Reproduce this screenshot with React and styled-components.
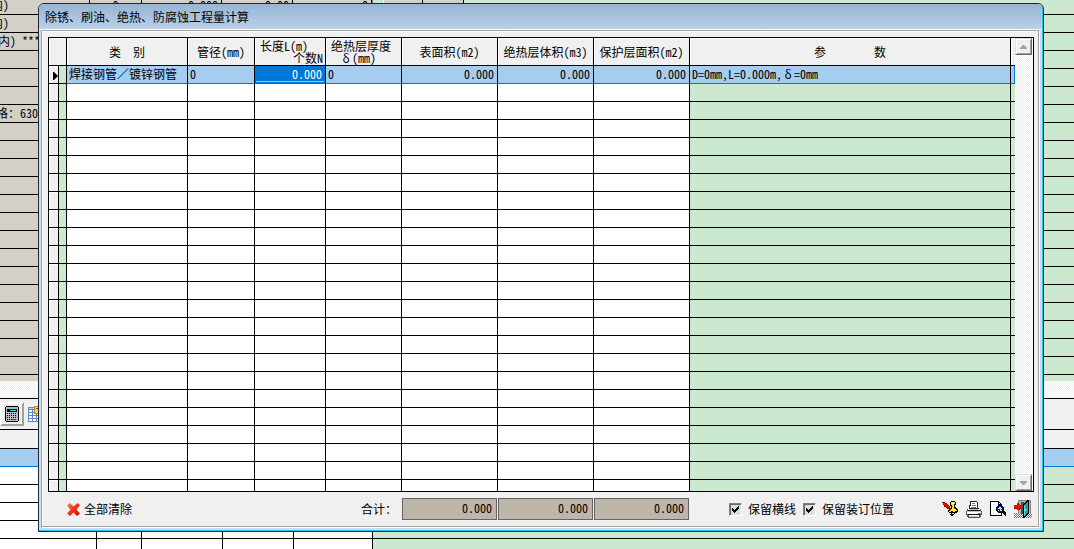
import styled, { createGlobalStyle, css } from "styled-components";
import { useState } from "react";

const GlobalStyle = createGlobalStyle`
  * {
    box-sizing: border-box;
  }
  body {
    margin: 0;
    background: #f0f0f0;
    color: #000;
    font-family: "Noto Sans Mono CJK SC", "Noto Sans CJK SC", monospace;
    font-size: 12px;
    line-height: 12px;
  }
  button, input {
    font: inherit;
    color: inherit;
  }
`;

const columns = [
  { id: "category", title: "类　别", width: 121 },
  { id: "diameter", title: "管径(mm)", width: 67 },
  { id: "length", width: 71 },
  { id: "thickness", width: 76 },
  { id: "surface", title: "表面积(m2)", width: 96, align: "right" },
  { id: "volume", title: "绝热层体积(m3)", width: 96, align: "right" },
  { id: "cover", title: "保护层面积(m2)", width: 96, align: "right" },
  { id: "params", title: "参　　　　数" },
];

const emptyRows = Array.from({ length: 23 }, (_, i) => i);

const backRows = Array.from({ length: 22 }, (_, i) => {
  if (i === 0) return { text: "内)", indent: -9, first: true };
  if (i === 1) return { text: "内)", indent: -9 };
  if (i === 2) return { text: "内) ***", indent: -2 };
  if (i === 6) return { text: "格：630", indent: -4 };
  return {};
});

const CalculatorIcon = () => (
  <svg width="14" height="16" viewBox="0 0 14 16" shapeRendering="crispEdges">
    <path d="M1 0h12v1h1v14h-1v1H1v-1H0V1h1z" fill="#000" />
    <rect x="1" y="1" width="12" height="14" fill="#b8b8b8" />
    <rect x="2" y="3" width="10" height="3" fill="#000" />
    <rect x="5" y="4" width="6" height="1" fill="#00e0f0" />
    <path
      d="M2 7.500h10M2 9.500h10M2 11.500h10M2 13.500h5"
      stroke="#000"
      strokeDasharray="1 1"
    />
    <rect x="7" y="13" width="4" height="1" fill="#f00" />
  </svg>
);

const SheetIcon = () => (
  <svg width="16" height="16" viewBox="0 0 16 16" shapeRendering="crispEdges">
    <rect x="0" y="1" width="16" height="15" fill="#5f86cf" />
    <path
      d="M1 4h3v2H1zM5 4h2v2H5zM1 7h3v2H1zM5 7h3v2H5zM9 7h3v2H9zM1 10h3v2H1zM5 10h3v2H5zM9 10h3v2H9zM1 13h3v2H1zM5 13h3v2H5zM9 13h3v2H9z"
      fill="#fff"
    />
    <rect x="1" y="2" width="5" height="1" fill="#b6cbf5" />
    <rect x="6" y="0" width="10" height="8" fill="#b08a20" />
    <rect x="7" y="1" width="9" height="6" fill="#ecd766" />
    <rect x="8" y="2" width="4" height="1" fill="#a33a12" />
  </svg>
);

const ClearIcon = () => (
  <svg width="13" height="13" viewBox="0 0 13 13">
    <defs>
      <linearGradient id="clearRed" x1="0" y1="0" x2="1" y2="1">
        <stop offset="0" stopColor="#ff7d60" />
        <stop offset="0.5" stopColor="#f03318" />
        <stop offset="1" stopColor="#b80d00" />
      </linearGradient>
    </defs>
    <path
      d="M0 2.500L3 0 6.500 3.500 10.500 0 13 2 9.500 6.500 13 10.500 10 13 6.500 9.500 3 13 0 10.500 3.500 6.500z"
      fill="url(#clearRed)"
    />
  </svg>
);

const ScrollIcon = () => (
  <svg width="16" height="16" viewBox="0 0 16 16" shapeRendering="crispEdges">
    <path
      d="M8 1h1V0h4v1h1v3h-1v2h1v1h1v1h1v3h-1v1h-2v1h-1v1h-1v1H9v-1H8v-1h1v-1H7v-1H6V9h2V8h1V5H8z"
      fill="#000"
    />
    <path
      d="M9 1h4v2h-1v4h1v1h1v1h1v1h-2v1h-2v-1H9v1H7v-1h1V9h1V8h1V4H9zM10 12h2v1h-2z"
      fill="#f3e43c"
    />
    <path d="M10 2h2v1h-2zM9 9h3v1H9z" fill="#fffb8c" />
    <path d="M12 7h1v1h-1zM10 5h1v1h-1z" fill="#9c8d0e" />
    <path
      d="M0 1h3v1h2v1h1v1h1v1h1v2h1v2H7V8H5V7H4V6H2V4H1V2H0z"
      fill="#8b0000"
    />
    <path d="M1 2h2v1h2v1h1v1h1v2H5V6H4V5H3V4H2V3H1z" fill="#f00" />
  </svg>
);

const PrinterIcon = () => (
  <svg width="16" height="17" viewBox="0 0 16 17" shapeRendering="crispEdges">
    <path d="M4 0h7v1h1v6h1v1H3V4h1z" fill="#222" />
    <path d="M5 1h6v6H4V5h1z" fill="#fff" />
    <path d="M6 2h3v1H6zM6 4h4v1H6zM5 6h5v1H5z" fill="#777" />
    <path
      d="M1 8h14v2h1v4h-1v2h-1v1H2v-1H1v-2H0v-4h1z"
      fill="#555"
    />
    <path d="M2 8h12v2H2zM1 10h14v3H1zM3 14h10v2H3z" fill="#fff" />
    <path d="M4 8h8v1H4zM1 10h14v1H1zM3 15h9v1H3z" fill="#c4c4c4" />
    <path d="M2 9h12v1H2zM2 13h12v1H2z" fill="#111" />
    <rect x="12" y="12" width="3" height="1" fill="#f06a20" />
  </svg>
);

const PreviewIcon = () => (
  <svg width="16" height="16" viewBox="0 0 16 16" shapeRendering="crispEdges">
    <path d="M0 0h9v1h1v1h1v1h1v12H0z" fill="#000" />
    <path d="M1 1h7v3h3v10H1z" fill="#fff" />
    <path d="M9 2h1v1H9z" fill="#fff" />
    <path
      d="M8 4h4v1h1v1h1v4h1v1h1v2h1v2h-2v-1h-1v-1h-1v-1H8v-1H7v-1H6V6h1V5h1z"
      fill="#000"
    />
    <path d="M8 5h4v1h1v4h-1v1H8v-1H7V6h1z" fill="#0018d8" />
    <path d="M9 6h2v1h1v1h-1v1h1v1h-2V8H9z" fill="#f4ef4a" />
    <path d="M8 7h1v1H8zM8 9h1v1H8z" fill="#d8e4ff" />
    <path d="M13 11h1v1h-1zM14 12h1v1h-1zM15 13h1v1h-1z" fill="#0018d8" />
  </svg>
);

const ExitIcon = () => (
  <svg width="18" height="18" viewBox="0 0 18 18" shapeRendering="crispEdges">
    <path
      d="M0 13.500h18M1 14.500h17M0 15.500h18M1 16.500h17M0 17.500h18"
      stroke="#707070"
      strokeDasharray="1 1"
    />
    <rect x="4" y="0" width="13" height="13" fill="#808080" />
    <rect x="5" y="1" width="11" height="12" fill="#b4b4b4" />
    <rect x="7" y="2" width="3" height="12" fill="#505050" />
    <path d="M9 4h1V3h1V2h1V1h1V0h2v14h-1v1h-1v1h-1v1h-1v1H9z" fill="#000" />
    <path d="M10 5h1V4h1V3h1V2h1v11h-1v1h-1v1h-1v1h-1z" fill="#12a6a6" />
    <rect x="10" y="5" width="1" height="11" fill="#58d8d8" />
    <rect x="11" y="9" width="1" height="2" fill="#fff" />
    <path d="M0 5h3V3h2v1h1v1h1v1h1v1H7v1H6v1H5v1H3V8H0z" fill="#f00" />
    <path d="M0 8h3v1H0zM6 8h1v1H6zM5 9h1v1H5z" fill="#8b0000" />
  </svg>
);

const CheckMark = () => (
  <CheckSvg width="7" height="7" viewBox="0 0 7 7" shapeRendering="crispEdges">
    <path d="M0 2h1v1h1v1h1V3h1V2h1V1h1V0h1v3H6v1H5v1H4v1H3v1H2V6H1V5H0z" />
  </CheckSvg>
);

const record = {
  category: "焊接钢管／镀锌钢管",
  diameter: "0",
  thickness: "0",
  surface: "0.000",
  volume: "0.000",
  cover: "0.000",
};

export default function App() {
  const [length, setLength] = useState("0.000");
  const [keepLines, setKeepLines] = useState(true);
  const [keepBinding, setKeepBinding] = useState(true);

  const renderCell = (id) => {
    if (id === "length") {
      return (
        <CellInput
          aria-label="长度"
          value={length}
          onChange={(e) => setLength(e.target.value)}
        />
      );
    }
    if (id === "params") {
      return (
        <>
          D=0mm,L={length}m,<Wide>δ</Wide>=0mm
        </>
      );
    }
    return record[id];
  };

  return (
    <Screen>
      <GlobalStyle />
      <Backdrop aria-hidden="true">
        <UpperPane>
          <BackTable>
            {backRows.map((row, i) => (
              <BackRow key={i} $first={row.first}>
                <BackCell $width={90} $indent={row.indent}>
                  {row.text}
                </BackCell>
                <BackCell $width={52} $center>
                  {row.first && "0"}
                </BackCell>
                <BackCell $width={80} $right>
                  {row.first && "0.000"}
                </BackCell>
                <BackCell $width={71} $right>
                  {row.first && "0.00"}
                </BackCell>
                <BackCell $width={79} $right>
                  {row.first && "0"}
                </BackCell>
              </BackRow>
            ))}
          </BackTable>
          <Splitter />
          <SideTable>
            {backRows.map((row, i) => (
              <BackRow key={i} $first={row.first}>
                <BackCell $width={39} $gray />
                <BackCell $width={41} $gray />
              </BackRow>
            ))}
          </SideTable>
        </UpperPane>
        <DitherStrip />
        <BackToolbar>
          <RaisedTool>
            <CalculatorIcon />
          </RaisedTool>
          <SheetIcon />
        </BackToolbar>
        <BackHeading />
        <LowerRow $selected />
        {[0, 1, 2, 3, 4, 5].map((i) => (
          <LowerRow key={i}>
            <LowerCell $width={97} />
            <LowerCell $width={45} />
            <LowerCell $width={81} />
            <LowerCell $width={71} />
            <LowerCell $width={79} />
            <LowerRest />
          </LowerRow>
        ))}
      </Backdrop>

      <Dialog role="dialog" aria-labelledby="dialogTitle">
        <TitleBar id="dialogTitle">除锈、刷油、绝热、防腐蚀工程量计算</TitleBar>
        <DialogBody>
          <GridFrame>
            <Table>
              <colgroup>
                <Col $width={10} />
                <Col $width={8} />
                {columns.map((col) => (
                  <Col key={col.id} $width={col.width} />
                ))}
                <Col $width={4} />
              </colgroup>
              <thead>
                <tr>
                  <HeadCell colSpan="2" />
                  {columns.map((col) => (
                    <HeadCell key={col.id} scope="col">
                      {col.id === "length" && (
                        <TwoLines>
                          <span>长度L(m)</span>
                          <EndLine>个数N</EndLine>
                        </TwoLines>
                      )}
                      {col.id === "thickness" && (
                        <TwoLines>
                          <span>绝热层厚度</span>
                          <MidLine>
                            <Wide>δ</Wide>(mm)
                          </MidLine>
                        </TwoLines>
                      )}
                      {col.title}
                    </HeadCell>
                  ))}
                  <HeadCell $last />
                </tr>
              </thead>
              <tbody>
                <Row $current>
                  <MarkCell>
                    <svg width="5" height="8" viewBox="0 0 5 8">
                      <path d="M0 0h1l4 4-4 4H0z" />
                    </svg>
                  </MarkCell>
                  <Cell $green />
                  {columns.map((col) => (
                    <Cell key={col.id} $align={col.align}>
                      {renderCell(col.id)}
                    </Cell>
                  ))}
                  <Cell $last />
                </Row>
                {emptyRows.map((i) => (
                  <Row key={i} $cut={i === emptyRows.length - 1}>
                    <MarkCell />
                    <Cell $green />
                    {columns.map((col) => (
                      <Cell key={col.id} $green={col.id === "params"} />
                    ))}
                    <Cell $green $last />
                  </Row>
                ))}
              </tbody>
            </Table>
            <ScrollBar>
              <ScrollButton type="button" aria-label="向上">
                <svg width="7" height="4" viewBox="0 0 7 4">
                  <path d="M3 0h1l3 3v1H0V3z" fill="#a0a0a0" />
                </svg>
              </ScrollButton>
              <ScrollButton type="button" aria-label="向下">
                <svg width="7" height="4" viewBox="0 0 7 4">
                  <path d="M3 4h1l3-3V0H0v1z" fill="#a0a0a0" />
                </svg>
              </ScrollButton>
            </ScrollBar>
          </GridFrame>

          <Footer>
            <FooterLead>
              <PlainButton type="button" onClick={() => setLength("0.000")}>
                <ClearIcon />
                全部清除
              </PlainButton>
              <span>合计：</span>
            </FooterLead>
            <Totals>
              <Total>0.000</Total>
              <Total>0.000</Total>
              <Total>0.000</Total>
            </Totals>
            <Options>
              <CheckLabel>
                <CheckBox
                  type="checkbox"
                  checked={keepLines}
                  onChange={(e) => setKeepLines(e.target.checked)}
                />
                {keepLines && <CheckMark />}
                保留横线
              </CheckLabel>
              <CheckLabel>
                <CheckBox
                  type="checkbox"
                  checked={keepBinding}
                  onChange={(e) => setKeepBinding(e.target.checked)}
                />
                {keepBinding && <CheckMark />}
                保留装订位置
              </CheckLabel>
            </Options>
            <Tools>
              <PlainButton type="button" aria-label="设置">
                <ScrollIcon />
              </PlainButton>
              <PlainButton type="button" aria-label="打印">
                <PrinterIcon />
              </PlainButton>
              <PlainButton type="button" aria-label="预览">
                <PreviewIcon />
              </PlainButton>
              <PlainButton type="button" aria-label="退出">
                <ExitIcon />
              </PlainButton>
            </Tools>
          </Footer>
        </DialogBody>
      </Dialog>
    </Screen>
  );
}

const dither = css`
  background: repeating-conic-gradient(#fff 0 25%, #f0f0f0 0 50%) 0 0 / 2px 2px;
`;

const raised = css`
  border: 1px solid;
  border-color: #e3e3e3 #696969 #696969 #e3e3e3;
  box-shadow: inset 1px 1px 0 #fff, inset -1px -1px 0 #a0a0a0;
  background: #f0f0f0;
`;

const Screen = styled.div`
  position: relative;
  height: 100vh;
  overflow: hidden;
`;

const Backdrop = styled.div`
  display: flex;
  flex-direction: column;
`;

const UpperPane = styled.div`
  display: flex;
  height: 381px;
  overflow: hidden;
`;

const BackTable = styled.div`
  background: #d4d0c8;
`;

const Splitter = styled.div`
  width: 12px;
  background: #cce8cf;
  border-left: 1px solid #808080;
  border-right: 1px solid #fff;
`;

const SideTable = styled.div`
  flex: 1;
  background: #cce8cf;
`;

const BackRow = styled.div`
  display: flex;
  height: ${(props) => (props.$first ? 15 : 18)}px;
  line-height: ${(props) => (props.$first ? 10 : 16)}px;
  border-bottom: 1px solid #000;
`;

const BackCell = styled.div`
  width: ${(props) => props.$width}px;
  padding-right: ${(props) => (props.$right ? 3 : 0)}px;
  text-indent: ${(props) => props.$indent || 0}px;
  text-align: ${(props) =>
    props.$right ? "right" : props.$center ? "center" : "left"};
  background: ${(props) => (props.$gray ? "#d4d0c8" : "transparent")};
  border-right: 1px solid #000;
  white-space: pre;
`;

const DitherStrip = styled.div`
  height: 18px;
  border-bottom: 1px solid #000;
  ${dither}
`;

const BackToolbar = styled.div`
  display: flex;
  align-items: center;
  gap: 4px;
  height: 31px;
  border-bottom: 1px solid #000;
`;

const RaisedTool = styled.div`
  display: flex;
  align-items: center;
  justify-content: center;
  width: 24px;
  height: 24px;
  border: 2px solid;
  border-color: #fff #a0a0a0 #a0a0a0 #fff;
`;

const BackHeading = styled.div`
  height: 19px;
  border-bottom: 1px solid #000;
`;

const LowerRow = styled.div`
  display: flex;
  height: 18px;
  background: ${(props) => (props.$selected ? "#a4cdf0" : "#fff")};
  border-bottom: 1px solid ${(props) => (props.$selected ? "#0078d7" : "#000")};
`;

const LowerCell = styled.div`
  width: ${(props) => props.$width}px;
  border-right: 1px solid #000;
`;

const LowerRest = styled.div`
  flex: 1;
  background: #cce8cf;
`;

const Dialog = styled.div`
  position: absolute;
  top: 3px;
  left: 38px;
  right: 30px;
  padding: 0 4px 4px 2px;
  overflow: hidden;
  background: #cbdcee;
  border: 1px solid #1c2b35;
  border-radius: 6px 6px 0 0;
  box-shadow: inset -1px -1px 0 #25c5ef;
`;

const TitleBar = styled.div`
  height: 26px;
  margin: 0 -3px 0 -2px;
  padding-left: 6px;
  line-height: 26px;
  background: linear-gradient(#98b4d2, #b9d1ea);
  border-bottom: 1px solid #fff;
`;

const DialogBody = styled.div`
  padding: 5px 3px 0 5px;
  background: #f0f0f0;
  border: 1px solid #a0a0a0;
  box-shadow: inset 1px 1px 0 #fff, 1px 1px 0 #fff;
`;

const GridFrame = styled.div`
  display: flex;
  margin: 1px 1px 0;
  border: 1px solid #000;
  border-bottom: none;
`;

const Table = styled.table`
  flex: 1;
  width: 0;
  table-layout: fixed;
  border-collapse: separate;
  border-spacing: 0;
`;

const Col = styled.col`
  width: ${(props) => (props.$width ? `${props.$width}px` : "auto")};
`;

const HeadCell = styled.th`
  height: 28px;
  padding: 0;
  font-weight: normal;
  white-space: nowrap;
  background: #f0f0f0;
  border-right: ${(props) => (props.$last ? "none" : "1px solid #000")};
  border-bottom: 1px solid #000;
  box-shadow: inset 1px 1px 0 #fff;
`;

const TwoLines = styled.div`
  display: flex;
  flex-direction: column;
  align-items: flex-start;
  padding: 0 2px 0 5px;
`;

const EndLine = styled.span`
  align-self: flex-end;
`;

const MidLine = styled.span`
  padding-left: 9px;
`;

const Wide = styled.span`
  display: inline-block;
  width: 12px;
  text-align: center;
`;

const Cell = styled.td`
  height: 18px;
  padding: 0 3px 1px 2px;
  overflow: hidden;
  white-space: nowrap;
  text-align: ${(props) => props.$align || "left"};
  background: ${(props) => (props.$green ? "#cce8cf" : "#fff")};
  border-right: ${(props) => (props.$last ? "none" : "1px solid #000")};
  border-bottom: 1px solid #000;
`;

const MarkCell = styled.td`
  padding: 2px 0 0 4px;
  background: #f0f0f0;
  border-right: 1px solid #000;
  border-bottom: 1px solid #000;
  box-shadow: inset 1px 1px 0 #fff;
  svg {
    display: block;
  }
`;

const Row = styled.tr`
  ${Cell} {
    height: ${(props) => (props.$cut ? 12 : 18)}px;
  }
  ${(props) =>
    props.$current &&
    css`
      ${Cell}:not(:nth-child(2)) {
        background: #a4cdf0;
        border-bottom-color: #0078d7;
      }
      ${Cell}:nth-child(5) {
        padding: 0;
      }
      ${Cell}:last-child {
        border-right: 1px solid #0078d7;
      }
    `}
`;

const CellInput = styled.input`
  display: block;
  width: 100%;
  height: 17px;
  padding: 0 2px 3px;
  border: 1px solid #0078d7;
  border-radius: 0;
  outline: none;
  color: #fff;
  text-align: right;
  background: #0078d7;
  box-shadow: inset 0 -1px 0 #a4cdf0;
`;

const ScrollBar = styled.div`
  display: flex;
  flex-direction: column;
  justify-content: space-between;
  width: 18px;
  border-bottom: 1px solid #000;
  ${dither}
`;

const ScrollButton = styled.button`
  display: flex;
  align-items: center;
  justify-content: center;
  width: 17px;
  height: 17px;
  padding: 0;
  ${raised}
`;

const Footer = styled.div`
  display: flex;
  align-items: center;
  height: 34px;
`;

const FooterLead = styled.div`
  display: flex;
  align-items: center;
  justify-content: space-between;
  width: 355px;
  padding: 0 5px 0 20px;
`;

const PlainButton = styled.button`
  display: flex;
  align-items: center;
  gap: 4px;
  padding: 0;
  border: none;
  background: none;
`;

const Totals = styled.div`
  display: flex;
  gap: 1px;
`;

const Total = styled.output`
  width: 95px;
  height: 22px;
  padding-right: 4px;
  line-height: 18px;
  text-align: right;
  background: #bdb6a9;
  border: 1px solid #646464;
`;

const Options = styled.div`
  display: flex;
  gap: 7px;
  margin-left: 40px;
`;

const CheckLabel = styled.label`
  position: relative;
  display: flex;
  align-items: center;
  gap: 6px;
`;

const CheckBox = styled.input`
  appearance: none;
  width: 13px;
  height: 13px;
  margin: 0;
  background: #cce8cf;
  border: 1px solid;
  border-color: #808080 #fff #fff #808080;
  box-shadow: inset 1px 1px 0 #696969, inset -1px -1px 0 #e3e3e3;
`;

const CheckSvg = styled.svg`
  position: absolute;
  top: 3px;
  left: 3px;
  pointer-events: none;
`;

const Tools = styled.div`
  display: flex;
  align-items: center;
  gap: 8px;
  margin-left: auto;
  padding-right: 3px;
`;
